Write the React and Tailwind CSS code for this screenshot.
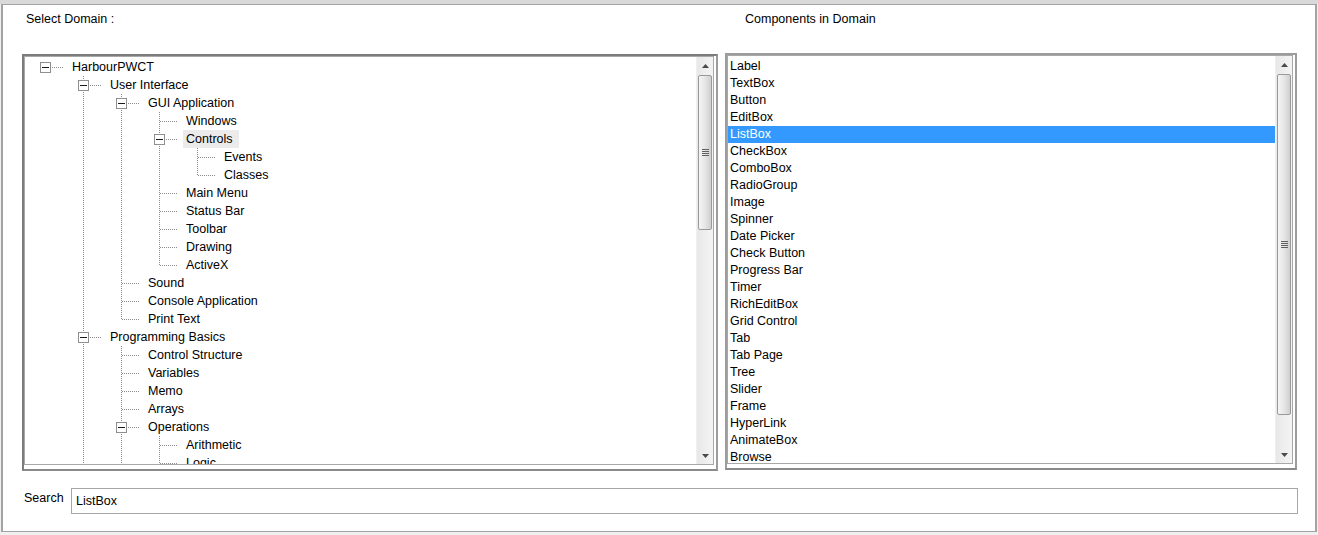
import React from 'react';

const treeRows = [
    { t: 'HarbourPWCT', d: 0, box: true },
    { t: 'User Interface', d: 1, box: true },
    { t: 'GUI Application', d: 2, box: true },
    { t: 'Windows', d: 3 },
    { t: 'Controls', d: 3, box: true, sel: true },
    { t: 'Events', d: 4 },
    { t: 'Classes', d: 4 },
    { t: 'Main Menu', d: 3 },
    { t: 'Status Bar', d: 3 },
    { t: 'Toolbar', d: 3 },
    { t: 'Drawing', d: 3 },
    { t: 'ActiveX', d: 3 },
    { t: 'Sound', d: 2 },
    { t: 'Console Application', d: 2 },
    { t: 'Print Text', d: 2 },
    { t: 'Programming Basics', d: 1, box: true },
    { t: 'Control Structure', d: 2 },
    { t: 'Variables', d: 2 },
    { t: 'Memo', d: 2 },
    { t: 'Arrays', d: 2 },
    { t: 'Operations', d: 2, box: true },
    { t: 'Arithmetic', d: 3 },
    { t: 'Logic', d: 3 },
    { t: 'Comparison', d: 3 },
    { t: 'Procedures', d: 2 },
    { t: 'Advanced', d: 1 },
];

const components = [
    'Label', 'TextBox', 'Button', 'EditBox', 'ListBox', 'CheckBox', 'ComboBox', 'RadioGroup',
    'Image', 'Spinner', 'Date Picker', 'Check Button', 'Progress Bar', 'Timer', 'RichEditBox',
    'Grid Control', 'Tab', 'Tab Page', 'Tree', 'Slider', 'Frame', 'HyperLink', 'AnimateBox', 'Browse',
];

// does the row have a later sibling?
const hasNext = (i) => {
    for (let j = i + 1; j < treeRows.length; j++) {
        if (treeRows[j].d < treeRows[i].d) return false;
        if (treeRows[j].d === treeRows[i].d) return true;
    }
    return false;
};

const ancestorAt = (i, k) => {
    for (let j = i - 1; j >= 0; j--) {
        if (treeRows[j].d === k) return j;
    }
    return -1;
};

const DOT = '#8a8a8a';

const Cell = ({ up, down, horiz, box }) => (
    <svg width="38" height="18" className="block shrink-0" shapeRendering="crispEdges">
        {up && down && <line x1="19.5" y1="0" x2="19.5" y2="18" stroke={DOT} strokeDasharray="1 1" />}
        {up && !down && <line x1="19.5" y1="0" x2="19.5" y2="10" stroke={DOT} strokeDasharray="1 1" />}
        {horiz && <line x1="20" y1="9.5" x2="37" y2="9.5" stroke={DOT} strokeDasharray="1 1" />}
        {box && (
            <g>
                <rect x="14.5" y="4.5" width="10" height="10" fill="#fff" stroke="#8f8f8f" />
                <line x1="16" y1="9.5" x2="23" y2="9.5" stroke="#1a1a1a" />
            </g>
        )}
    </svg>
);

const TreeRow = ({ row, i }) => {
    const cols = [];
    for (let k = 0; k < row.d; k++) {
        const a = ancestorAt(i, k);
        const line = k > 0 && a >= 0 && hasNext(a);
        cols.push(<Cell key={k} up={line} down={line} />);
    }
    const own = row.d > 0;
    cols.push(<Cell key="own" up={own} down={own && hasNext(i)} horiz box={row.box} />);
    return (
        <div className="flex h-[18px] items-center">
            {cols}
            <span className={`ml-[5px] pl-[3px] pr-[6px] h-[18px] leading-[18px] whitespace-nowrap ${row.sel ? 'bg-[#ebebeb]' : ''}`}>
                {row.t}
            </span>
        </div>
    );
};

const Arrow = ({ down }) => (
    <svg width="7" height="4" className="block">
        <path d={down ? 'M0 0 H7 L3.5 4 Z' : 'M0 4 H7 L3.5 0 Z'} fill="#4a4a4a" />
    </svg>
);

const ScrollBar = ({ thumb }) => (
    <div className="w-[17px] h-full flex flex-col bg-linear-to-r from-[#e8e8e8] to-[#f4f4f4] border-l border-[#f0f0f0]">
        <div className="h-[17px] flex items-center justify-center">
            <Arrow />
        </div>
        <div
            className={`${thumb} mt-px mx-px rounded-[2px] border border-[#9a9a9a] bg-linear-to-r from-[#f5f5f5] via-[#e6e6e6] to-[#cfcfcf] flex items-center justify-center`}
        >
            <svg width="7" height="7" className="block" shapeRendering="crispEdges">
                <line x1="0" y1="0.5" x2="7" y2="0.5" stroke="#606060" />
                <line x1="0" y1="2.5" x2="7" y2="2.5" stroke="#606060" />
                <line x1="0" y1="4.5" x2="7" y2="4.5" stroke="#606060" />
                <line x1="0" y1="6.5" x2="7" y2="6.5" stroke="#606060" />
            </svg>
        </div>
        <div className="flex-1" />
        <div className="h-[17px] flex items-center justify-center">
            <Arrow down />
        </div>
    </div>
);

const App = () => {
    return (
        <div className="w-[1318px] h-[535px] bg-[#f0f0f0] flex flex-col font-['Liberation_Sans',Arial,sans-serif] text-[12.5px] text-black">
            <div className="h-[4px] bg-[#d9d9d9]" />
            <div className="mx-[1px] h-[528px] bg-white border-t border-x-2 border-b border-[#a3a3a3] flex flex-col">
                {/* Labels */}
                <div className="h-[48px] flex pt-[7px] leading-[14px]">
                    <div className="w-[742px] pl-[23px]">Select Domain :</div>
                    <div>Components in Domain</div>
                </div>

                {/* Panels */}
                <div className="flex items-start pl-[19px] gap-[7px]">
                    {/* Tree */}
                    <div className="mt-px w-[696px] h-[417px] border-2 border-t-[#7c7c7c] border-l-[#7c7c7c] border-r-[#9c9c9c] border-b-[#8a8a8a] bg-white pr-[2px] pb-[4px]">
                        <div className="h-full flex border border-[#a8a8a8]">
                            <div className="flex-1 overflow-hidden pl-px pt-px">
                                {treeRows.map((row, i) => (
                                    <TreeRow key={i} row={row} i={i} />
                                ))}
                            </div>
                            <ScrollBar thumb="h-[155px]" />
                        </div>
                    </div>

                    {/* Components list */}
                    <div className="w-[572px] h-[417px] border-2 border-t-[#9c9c9c] border-l-[#9c9c9c] border-r-[#9c9c9c] border-b-[#8a8a8a] bg-white pr-[2px] pb-[4px]">
                        <div className="h-full flex border border-[#a8a8a8]">
                            <div className="flex-1 overflow-hidden pt-[2px]">
                                {components.map((c) => (
                                    <div
                                        key={c}
                                        className={`h-[17px] leading-[17px] pl-[2px] whitespace-nowrap ${c === 'ListBox' ? 'bg-[#3399ff] text-white' : ''}`}
                                    >
                                        {c}
                                    </div>
                                ))}
                            </div>
                            <ScrollBar thumb="h-[341px]" />
                        </div>
                    </div>
                </div>

                {/* Search */}
                <div className="mt-[17px] flex items-start pl-[21px]">
                    <div className="w-[47px] mt-[3px] leading-[14px]">Search</div>
                    <div className="w-[1227px] h-[26px] border border-[#a6a6a6] flex items-center pl-[4px] pt-px">
                        ListBox
                    </div>
                </div>
            </div>
        </div>
    );
};

export default App;
